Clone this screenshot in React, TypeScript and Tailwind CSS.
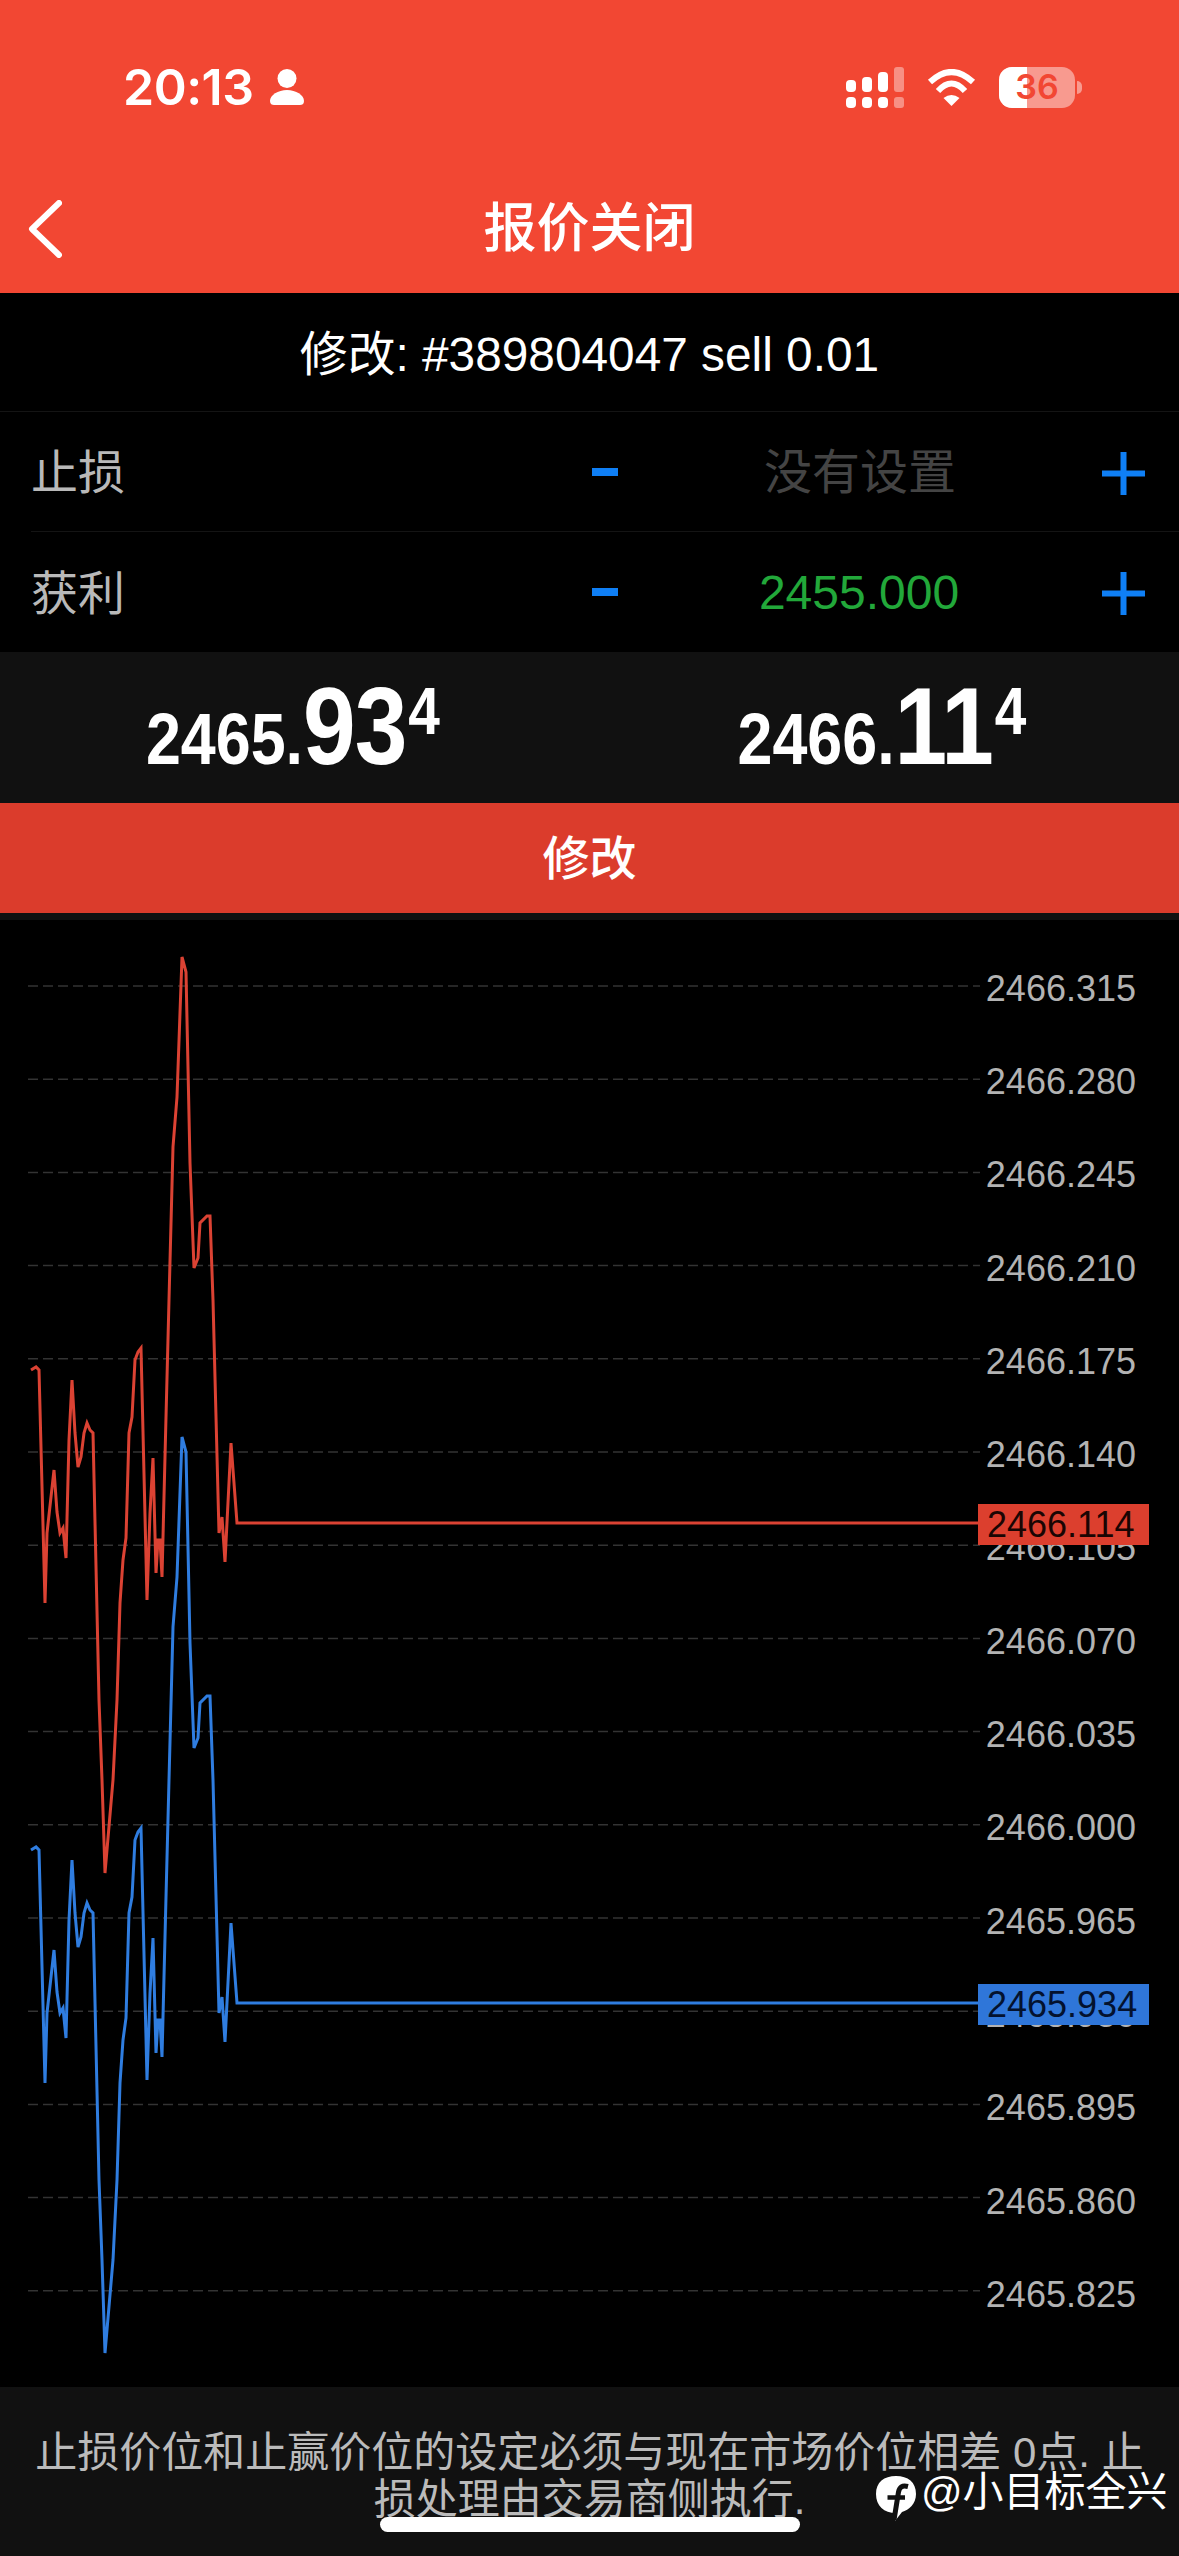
const levels = [
  "2466.315", "2466.280", "2466.245", "2466.210", "2466.175",
  "2466.140", "2466.105", "2466.070", "2466.035", "2466.000",
  "2465.965", "2465.930", "2465.895", "2465.860", "2465.825",
];

// ask trace in page coordinates, bid is the same shape 480px lower
const trace: [number, number][] = [
  [31, 1370], [36, 1367], [39, 1370], [45, 1603], [47, 1533], [54, 1470], [57, 1512], [60, 1533],
  [63, 1528], [66, 1558], [69, 1440], [72, 1380], [75, 1433], [78, 1467], [81, 1457], [84, 1433],
  [87, 1423], [90, 1430], [93, 1433], [99, 1700], [102, 1780], [105, 1873], [113, 1780], [117, 1700],
  [120, 1603], [123, 1560], [126, 1538], [129, 1433], [132, 1417], [135, 1360], [138, 1352], [141, 1348],
  [147, 1600], [150, 1513], [153, 1458], [156, 1573], [158, 1540], [160, 1540], [162, 1577], [166, 1417],
  [169, 1300], [173, 1147], [177, 1097], [182, 957], [186, 972], [190, 1163], [194, 1268], [198, 1258],
  [200, 1223], [207, 1216], [210, 1216], [213, 1300], [219, 1533], [222, 1517], [225, 1562], [231, 1443],
  [237, 1523], [978, 1523],
];

const toPoints = (offset: number) => trace.map(([x, y]) => `${x},${y + offset}`).join(" ");

function StatusBar() {
  return (
    <div className="h-[174px] flex items-center justify-between pl-[123px] pr-[97px] text-white">
      <div className="flex items-center gap-[16px]">
        <span className="text-[50px] leading-none font-semibold tracking-[-0.5px] [font-family:Inter,sans-serif]">20:13</span>
        <svg width="34" height="36" viewBox="0 0 34 36" fill="white">
          <circle cx="17" cy="9.5" r="9.5" />
          <path d="M0 32C0 26 8 21 17 21C26 21 34 26 34 32C34 35 32 36 30 36H4C2 36 0 35 0 32Z" />
        </svg>
      </div>
      <div className="flex items-center">
        <svg width="58" height="41" viewBox="0 0 58 41" fill="white">
          <rect x="0" y="13" width="10" height="12" rx="4" />
          <rect x="16" y="10" width="10" height="15" rx="4" />
          <rect x="32" y="5" width="10" height="20" rx="4" />
          <rect x="48" y="0" width="10" height="25" rx="3" fillOpacity="0.4" />
          <rect x="0" y="30" width="10" height="11" rx="4" />
          <rect x="16" y="30" width="10" height="11" rx="4" />
          <rect x="32" y="30" width="10" height="11" rx="4" />
          <rect x="48" y="30" width="10" height="11" rx="3" fillOpacity="0.4" />
        </svg>
        <svg className="ml-[23px]" width="49" height="37" viewBox="0 0 49 37" fill="none">
          <path d="M3 13Q24.5 -7 46 13" stroke="white" strokeWidth="6" />
          <path d="M11 22Q24.5 7 38 22" stroke="white" strokeWidth="6" />
          <path d="M16.5 29Q24.5 23 32.5 29L24.5 37Z" fill="white" />
        </svg>
        <div className="ml-[23px] relative w-[76px] h-[41px] rounded-[13px] bg-white/45 overflow-hidden">
          <div className="w-[28px] h-full bg-white" />
          <span className="absolute inset-0 flex items-center justify-center text-[#f24733] text-[34px] font-semibold leading-none [font-family:Inter,sans-serif]">
            36
          </span>
        </div>
        <div className="ml-[2px] w-[5px] h-[13px] rounded-r-full bg-white/45" />
      </div>
    </div>
  );
}

function NavBar() {
  return (
    <div className="h-[119px] pb-[10px] grid grid-cols-[1fr_auto_1fr] items-center text-white">
      <svg className="ml-[28px]" width="34" height="58" viewBox="0 0 34 58" fill="none">
        <path d="M31 3L4 29L31 55" stroke="white" strokeWidth="6" strokeLinecap="round" strokeLinejoin="round" />
      </svg>
      <h1 className="text-[53px] leading-none font-medium">报价关闭</h1>
      <div />
    </div>
  );
}

function Minus() {
  return <div className="w-[26px] h-[8px] bg-[#0f7ff5]" />;
}

function Plus() {
  return (
    <svg className="mt-[3px]" width="43" height="43" viewBox="0 0 43 43" fill="#0f7ff5">
      <rect x="0" y="18.5" width="43" height="6" />
      <rect x="18.5" y="0" width="6" height="43" />
    </svg>
  );
}

function LevelRow({ label, value, valueClass, line }: { label: string; value: string; valueClass: string; line?: boolean }) {
  return (
    <div className={`ml-[31px] h-[120px] pr-[34px] grid grid-cols-[561px_26px_1fr_43px] items-center ${line ? "border-b border-[#141414]" : ""}`}>
      <span className="pt-[2px] text-[47px] leading-none text-[#b9b9b9]">{label}</span>
      <Minus />
      <span className={`pt-[2px] text-center text-[48px] leading-none ${valueClass}`}>{value}</span>
      <Plus />
    </div>
  );
}

function Price({ head, big, tail }: { head: string; big: string; tail: string }) {
  return (
    <div className="flex-1 flex justify-center pr-[4px]">
      <div className="flex items-baseline font-bold text-white leading-none scale-x-[0.86]">
        <span className="text-[73px]">{head}</span>
        <span className="text-[110px] tracking-[-1px]">{big}</span>
        <span className="text-[66px] ml-[2px] relative -top-[30px]">{tail}</span>
      </div>
    </div>
  );
}

function FacebookMark() {
  return (
    <svg width="40" height="45" viewBox="0 0 40 45" fill="none">
      <path d="M20 0C32 0 40 6 40 18C40 28 33 34 26 36L19 45L20 37C8 37 0 30 0 18C0 6 8 0 20 0Z" fill="white" />
      <path d="M32 10.5C26 9 23.5 11 22.5 16L18 44" stroke="#111111" strokeWidth="5" />
      <path d="M11.5 21.5H29" stroke="#111111" strokeWidth="4.5" />
    </svg>
  );
}

function Chart() {
  return (
    <div className="relative flex-1 overflow-hidden">
      <div className="pt-[22px] pr-[43px] flex flex-col items-end">
        {levels.map((l) => (
          <div key={l} className="h-[93.3px] flex items-center text-[36px] leading-none text-[#b3b3b3]">
            {l}
          </div>
        ))}
      </div>
      <svg className="absolute inset-0" width="1179" height="1467" viewBox="0 920 1179 1467" fill="none">
        {levels.map((l, i) => (
          <line key={l} x1="28" x2="980" y1={986 + i * 93.2} y2={986 + i * 93.2} stroke="#333333" strokeWidth="1.5" strokeDasharray="10 5" />
        ))}
        <polyline points={toPoints(0)} stroke="#db4233" strokeWidth="3" />
        <polyline points={toPoints(480)} stroke="#2f7de0" strokeWidth="3" />
      </svg>
      <div className="absolute left-[978px] top-[584px] w-[171px] h-[41px] pl-[9px] pt-[1px] bg-[#dc3f2e] flex items-center text-[36px] leading-none text-[#1a0503]">
        2466.114
      </div>
      <div className="absolute left-[978px] top-[1064px] w-[171px] h-[41px] pl-[9px] pt-[1px] bg-[#2f76d9] flex items-center text-[36px] leading-none text-[#04122e]">
        2465.934
      </div>
    </div>
  );
}

export default function App() {
  return (
    <div className="relative w-[1179px] h-[2556px] flex flex-col bg-black overflow-hidden [font-family:'Liberation_Sans','Noto_Sans_CJK_SC',sans-serif]">
      <header className="h-[293px] bg-[#f24733]">
        <StatusBar />
        <NavBar />
      </header>

      <div className="h-[119px] pt-[5px] flex items-center justify-center border-b border-[#141414] text-white text-[47.8px] leading-none">
        修改: #389804047 sell 0.01
      </div>

      <LevelRow label="止损" value="没有设置" valueClass="text-[#444444]" line />
      <LevelRow label="获利" value="2455.000" valueClass="text-[#22a83a] pr-[2px]" />

      <div className="h-[151px] pb-[4px] bg-[#111111] flex items-center">
        <Price head="2465." big="93" tail="4" />
        <Price head="2466." big="11" tail="4" />
      </div>

      <button className="h-[110px] bg-[#db3c2c] text-white text-[47px] leading-none font-medium">修改</button>
      <div className="h-[7px] bg-[#111111]" />

      <Chart />

      <footer className="h-[169px] bg-[#111111] px-[30px] pt-[42px] text-center text-[42px] leading-[47px] text-[#bbbbbb]">
        止损价位和止赢价位的设定必须与现在市场价位相差 0点. 止损处理由交易商侧执行.
      </footer>

      {/* watermark and home indicator sit on top of the footer */}
      <div className="absolute left-[876px] top-[2472px] flex items-center gap-[5px] text-white text-[41px] leading-none">
        <FacebookMark />
        <span className="mb-[12px]">@小目标全兴</span>
      </div>
      <div className="absolute left-[380px] top-[2517px] w-[420px] h-[15px] rounded-full bg-white" />
    </div>
  );
}
